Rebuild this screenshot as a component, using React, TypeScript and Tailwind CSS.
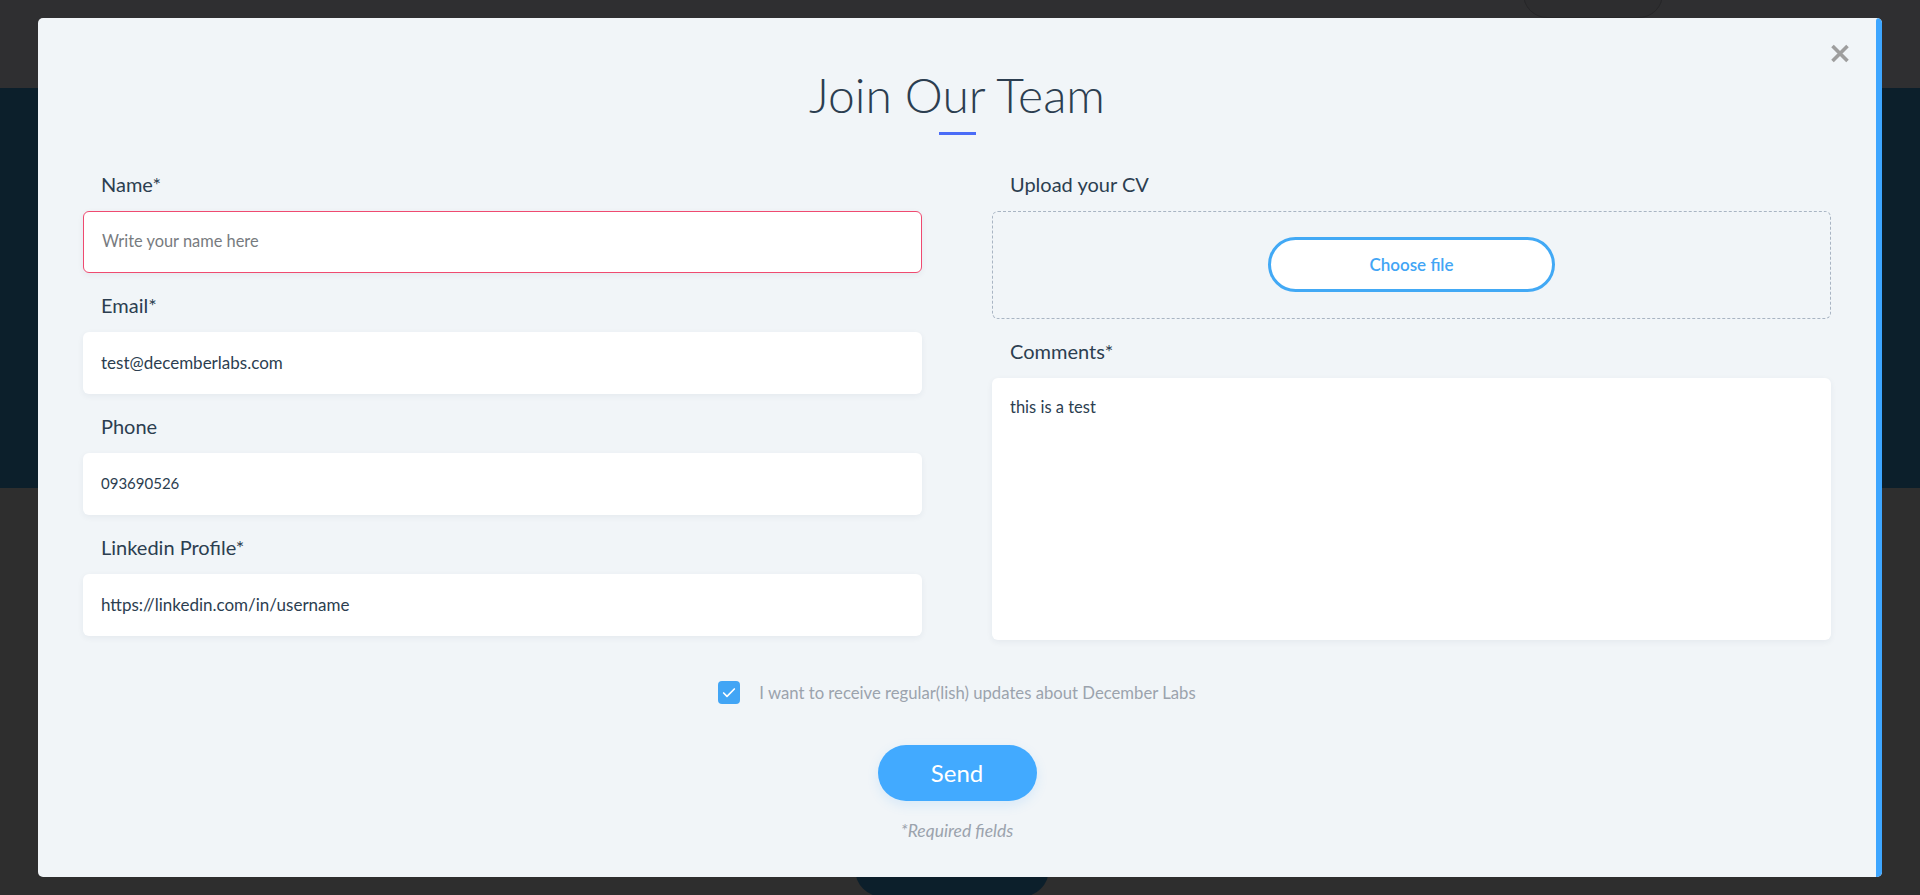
import { Check } from 'lucide-react';

const font = { fontFamily: 'Lato, "Open Sans", sans-serif' };

function Field({
  label,
  value,
  placeholder,
  invalid,
  size = 'text-[17px]',
}: {
  label: string;
  value?: string;
  placeholder?: string;
  invalid?: boolean;
  size?: string;
}) {
  return (
    <div className="flex flex-col">
      <label className="pl-[18px] mb-[15px] text-[20px] leading-6 text-[#2c3e50]">{label}</label>
      <div
        className={`h-[62px] flex items-center pl-[18px] rounded-[6px] bg-white shadow-[0_2px_6px_rgba(30,50,80,0.06)] ${size} ${
          invalid ? 'border border-[#ef4a70]' : ''
        }`}
      >
        {value ? (
          <span className="text-[#2c3e50]">{value}</span>
        ) : (
          <span className="text-[#777b80]">{placeholder}</span>
        )}
      </div>
    </div>
  );
}

export default function App() {
  return (
    <div className="relative w-[1920px] h-[895px] overflow-hidden bg-[#2e2e2e]" style={font}>
      {/* page behind the overlay */}
      <div className="h-[88px] bg-[#2f2f31]" />
      <div className="h-[400px] bg-[#0c1f2b]" />
      <div className="absolute left-[1523px] top-[-30px] w-[140px] h-[48px] rounded-full border border-[#262628] bg-[#2d2d2f]" />
      <div className="absolute left-[855px] top-[841px] w-[194px] h-[56px] rounded-full bg-[#0c1f2b]" />

      {/* modal */}
      <div className="absolute left-[38px] top-[18px] w-[1844px] h-[859px] rounded-[5px] overflow-hidden bg-[#f1f5f8]">
        <div className="absolute right-0 top-0 bottom-0 w-[6px] rounded-t-[3px] bg-[#3ea6ff]" />
        <button className="absolute top-[25px] right-[32px] w-5 h-5">
          <svg width="20" height="19" viewBox="0 0 20 19">
            <path d="M2.5 2 L17.5 17 M17.5 2 L2.5 17" stroke="#9e9e9e" strokeWidth="3.6" />
          </svg>
        </button>

        <div className="w-[1838px] px-[45px] pt-[48px] flex flex-col items-center">
          <h1 className="text-[48px] leading-[1.2] font-light text-[#2c3e50]">Join Our Team</h1>
          <div className="mt-[8px] w-[37px] h-[3px] bg-[#4a6cf7]" />

          <div className="mt-[37px] w-full grid grid-cols-2 gap-x-[70px]">
            <div className="flex flex-col gap-5">
              <Field label="Name*" placeholder="Write your name here" invalid size="text-[16.4px]" />
              <Field label="Email*" value="test@decemberlabs.com" />
              <Field label="Phone" value="093690526" size="text-[15px]" />
              <Field label="Linkedin Profile*" value="https://linkedin.com/in/username" />
            </div>

            <div className="flex flex-col">
              <label className="pl-[18px] mb-[15px] text-[20px] leading-6 text-[#2c3e50]">Upload your CV</label>
              <div className="h-[108px] flex items-center justify-center rounded-[6px] border border-dashed border-[#a9b5c3]">
                <button className="w-[287px] h-[55px] rounded-full bg-white border-[3px] border-[#42a9f5] text-[17px] font-semibold text-[#42a5f5]">
                  Choose file
                </button>
              </div>

              <label className="mt-5 pl-[18px] mb-[15px] text-[20px] leading-6 text-[#2c3e50]">Comments*</label>
              <div className="h-[262px] rounded-[6px] bg-white pt-[17px] px-[18px] text-[16.5px] leading-6 text-[#2c3e50] shadow-[0_2px_6px_rgba(30,50,80,0.06)]">
                this is a test
              </div>
            </div>
          </div>

          <div className="mt-[41px] flex items-center gap-[19px]">
            <span className="w-[22px] h-[23px] rounded-[4px] bg-[#42a5f5] flex items-center justify-center">
              <Check size={16} strokeWidth={2.5} color="white" />
            </span>
            <span className="text-[16.7px] leading-6 text-[#9ba3ad]">
              I want to receive regular(lish) updates about December Labs
            </span>
          </div>

          <button className="mt-[40px] w-[159px] h-[56px] rounded-full bg-[#42aaff] text-[24px] text-white shadow-[0_4px_12px_rgba(66,170,255,0.15)]">
            Send
          </button>

          <p className="mt-[20px] text-[17.5px] leading-5 italic text-[#9ba3ad]">*Required fields</p>
        </div>
      </div>
    </div>
  );
}
